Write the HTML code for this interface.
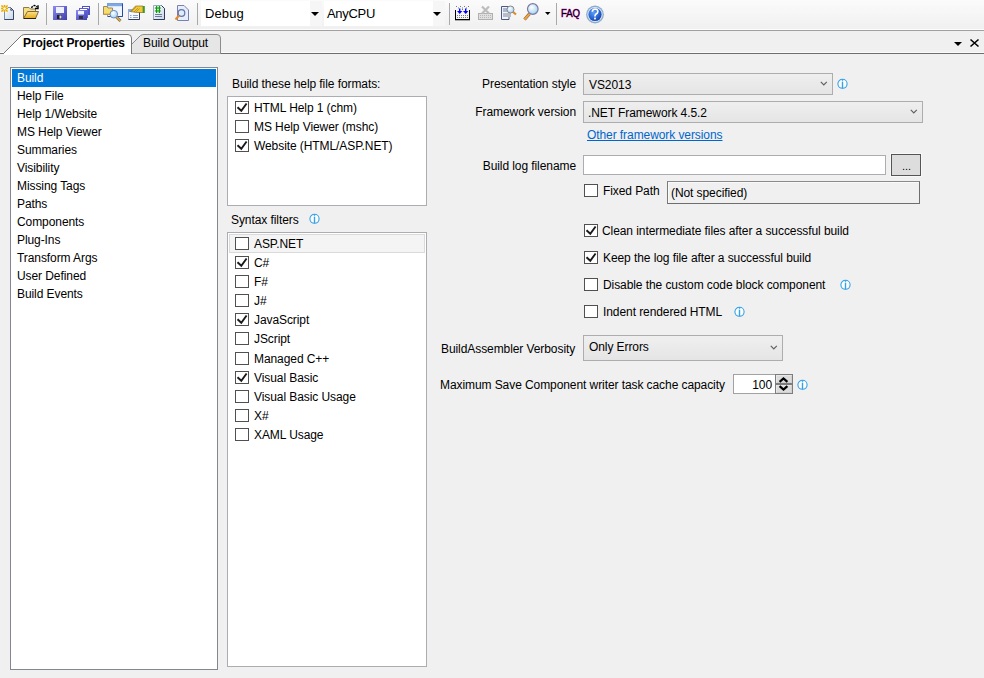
<!DOCTYPE html>
<html><head><meta charset="utf-8">
<style>
*{box-sizing:border-box;margin:0;padding:0}
html,body{width:984px;height:678px;overflow:hidden;background:#f0f0f0}
body{position:relative;font-family:"Liberation Sans",sans-serif;font-size:12px;letter-spacing:-0.08px;color:#000}
.a{position:absolute}
.t{position:absolute;white-space:nowrap;line-height:14px}
#tb{left:0;top:0;width:984px;height:29px;background:linear-gradient(#fbfbfb,#f0f0f0)}
.sep{position:absolute;top:3px;width:1px;height:22px;background:#b9b9b9;border-right:1px solid #fff;width:2px}
.combo{position:absolute;top:1px;height:25px;background:#fff}
.combo .dd{position:absolute;right:0;top:0;width:12px;height:25px;background:#f6f6f6}
.tri{position:absolute;width:0;height:0;border-left:4px solid transparent;border-right:4px solid transparent;border-top:4px solid #000}
.box{position:absolute;background:#fff;border:1px solid #abadb3}
.cb{position:absolute;width:14px;height:13px;border:1px solid #505050;background:#fff}
.cb svg{position:absolute;left:1px;top:1px;overflow:visible}
.dcombo{position:absolute;border:1px solid #adadad;background:linear-gradient(#efefef,#e5e5e5)}
.chev{position:absolute}
.info{position:absolute;width:11px;height:11px}
svg{display:block}
</style></head><body>

<!-- toolbar -->
<div id="tb" class="a"></div>
<div class="a" style="left:0;top:29px;width:984px;height:1px;background:#fdfdfd"></div>
<div class="a" style="left:0;top:30px;width:984px;height:1px;background:#a0a0a0"></div>


<svg class="a" style="left:0;top:0" width="984" height="29">
<defs>
<linearGradient id="gdoc" x1="0" y1="0" x2="1" y2="1"><stop offset="0" stop-color="#ffffff"/><stop offset="1" stop-color="#c9d6e8"/></linearGradient>
<linearGradient id="gfold" x1="0" y1="0" x2="0" y2="1"><stop offset="0" stop-color="#fbe38a"/><stop offset="1" stop-color="#e8a81a"/></linearGradient>
<linearGradient id="gdisk" x1="0" y1="0" x2="1" y2="1"><stop offset="0" stop-color="#8c8cf0"/><stop offset="1" stop-color="#3c3cb0"/></linearGradient>
<radialGradient id="ghelp" cx="0.4" cy="0.35" r="0.7"><stop offset="0" stop-color="#5aa0ff"/><stop offset="1" stop-color="#1040b0"/></radialGradient>
<radialGradient id="glens" cx="0.4" cy="0.35" r="0.7"><stop offset="0" stop-color="#ffffff"/><stop offset="1" stop-color="#9fd0f0"/></radialGradient>
</defs>
<!-- separators -->
<g fill="#a9a9a9"><rect x="46" y="3" width="1" height="22"/><rect x="98" y="3" width="1" height="22"/><rect x="197" y="3" width="1" height="22"/><rect x="449" y="3" width="1" height="22"/><rect x="556" y="3" width="1" height="22"/></g>
<!-- new -->
<path d="M4.5 7.5 H10.5 L13.5 10.5 V19.5 H4.5 Z" fill="url(#gdoc)" stroke="#7a8eae"/>
<path d="M10.5 7.5 L13.5 10.5 V19.5 H4.5" fill="none" stroke="#34486a"/>
<path d="M10 8 L13 11 L10.5 10.5 Z" fill="#34486a"/>
<rect x="1" y="5" width="7" height="7" fill="#f8e290" opacity="0.9"/>
<g stroke="#e0aa10" stroke-width="1.1"><path d="M1 8.5 H8 M4.5 5 V12 M1.5 5.5 L7.5 11.5 M7.5 5.5 L1.5 11.5"/></g>
<circle cx="4.5" cy="8.5" r="1.3" fill="#fffbe0"/>
<!-- open -->
<path d="M23.5 7.5 H29 L30.5 9 H35.5 V18.5 H23.5 Z" fill="#f7df80" stroke="#8a7a55"/>
<path d="M27.5 11.5 H38.5 L35.5 18.5 H23.5 Z" fill="url(#gfold)" stroke="#7a6a45"/>
<path d="M36 18.5 H24" stroke="#2a2010"/>
<path d="M31.6 8 Q32.6 5.3 35 5.6 Q36.2 5.8 37 7" fill="none" stroke="#000" stroke-width="1.4" stroke-dasharray="2 1"/>
<path d="M35 8.5 H38 V5.2" fill="none" stroke="#000" stroke-width="1.4"/>
<!-- save -->
<rect x="53" y="6" width="14" height="14" fill="url(#gdisk)"/>
<rect x="56" y="7" width="8" height="6" fill="#eef0ff"/>
<rect x="57" y="15" width="5" height="4" fill="#222"/><rect x="59.5" y="15.5" width="2" height="3" fill="#ddd"/>
<!-- save all -->
<rect x="82" y="6" width="8" height="9" fill="#5050c8"/><rect x="83" y="7" width="6" height="1.5" fill="#fff"/>
<rect x="79" y="8" width="9" height="10" fill="#6060d0"/><rect x="80" y="9" width="7" height="1.5" fill="#fff"/>
<rect x="76" y="10" width="11" height="10" fill="url(#gdisk)"/>
<rect x="78" y="11" width="6" height="3.5" fill="#eef0ff"/><rect x="79" y="16" width="4" height="3" fill="#333"/>
<!-- project explorer -->
<rect x="107.5" y="3.5" width="15" height="13" fill="#eef5fc" stroke="#7aa0dc"/>
<path d="M122.5 3.5 V16.5 H108" fill="none" stroke="#2a4aa8"/>
<rect x="108" y="4" width="14" height="2.2" fill="#7fa8e4"/>
<path d="M103.5 6.5 H107 L108 8 H112.5 V14.5 H103.5 Z" fill="#f6dc70" stroke="#9a8a60"/>
<path d="M104 14 H112" stroke="#e8a820"/>
<path d="M116.5 17 L120.5 21" stroke="#8a6a30" stroke-width="2.8"/>
<path d="M116.5 17 L120.5 21" stroke="#d8b050" stroke-width="1.4"/>
<circle cx="113.8" cy="14.2" r="3.8" fill="url(#glens)" stroke="#6a88c0"/>
<!-- doc with pencil -->
<rect x="128.5" y="9.5" width="11" height="10" fill="#f6f9ff" stroke="#9aaad0"/>
<path d="M139.5 9.5 V19.5 H128.5" fill="none" stroke="#34405a"/>
<rect x="129" y="10" width="3" height="2" fill="#7aaae8"/>
<path d="M130 15.5 H131.5 M133 15.5 H138 M130 17.5 H131.5 M133 17.5 H138" stroke="#8aa0c8"/>
<path d="M130.5 11.5 L135.5 6 L143 6 L143 12.5 L136.5 12.5 Z" fill="#f2c838" stroke="#7a5a10" stroke-width="0.6"/>
<path d="M132 11 L136 7 M134 12 L138 8 M136 12 L139.5 8.5" stroke="#5a4a20" stroke-width="0.5" opacity="0.7"/>
<rect x="143" y="6" width="1.8" height="7" fill="#30a030"/>
<!-- # doc -->
<path d="M153.5 5.5 H161.5 L164.5 8.5 V19.5 H153.5 Z" fill="url(#gdoc)" stroke="#9aaac4"/>
<path d="M161.5 5.5 L164.5 8.5 V19.5 H153.5" fill="none" stroke="#2c3c5c"/>
<g fill="#109a10"><rect x="156" y="6" width="1.2" height="7"/><rect x="158.8" y="6" width="1.2" height="7"/><rect x="154.8" y="7.5" width="6" height="1.1"/><rect x="154.8" y="10.4" width="6" height="1.1"/></g>
<path d="M155 14.5 H162 M155 16.5 H162" stroke="#6c7c98"/>
<!-- search doc -->
<path d="M177.5 5.5 H184 L188.5 10 V20.5 H177.5 Z" fill="#e4eefc" stroke="#7a80b0"/>
<circle cx="181.5" cy="13" r="3.3" fill="#d8f0fc" stroke="#7070a8" stroke-width="1.2"/>
<path d="M179 15.5 L175.5 19.5" stroke="#e88a20" stroke-width="2"/>
<!-- add icon -->
<g fill="#000"><rect x="455" y="10" width="1" height="10"/><rect x="469" y="10" width="1" height="10"/><rect x="455" y="19" width="15" height="1.3"/></g>
<g fill="#7a7a7a"><rect x="456" y="6" width="1" height="1"/><rect x="460" y="6" width="1" height="1"/><rect x="464" y="6" width="1" height="1"/><rect x="468" y="6" width="1" height="1"/><rect x="458" y="7.5" width="1" height="1"/><rect x="462" y="7.5" width="1" height="1"/><rect x="466" y="7.5" width="1" height="1"/><rect x="462" y="9" width="1" height="1"/>
<rect x="457" y="15" width="1" height="1"/><rect x="459" y="15" width="1" height="1"/><rect x="461" y="15" width="1" height="1"/><rect x="463" y="15" width="1" height="1"/><rect x="465" y="15" width="1" height="1"/><rect x="467" y="15" width="1" height="1"/>
<rect x="457" y="17" width="1" height="1"/><rect x="459" y="17" width="1" height="1"/><rect x="461" y="17" width="1" height="1"/><rect x="463" y="17" width="1" height="1"/><rect x="465" y="17" width="1" height="1"/><rect x="467" y="17" width="1" height="1"/></g>
<g fill="#0000ff"><rect x="459" y="8.5" width="1.4" height="3"/><path d="M457 11 H462.4 L459.7 14 Z"/><rect x="465" y="8.5" width="1.4" height="3"/><path d="M463 11 H468.4 L465.7 14 Z"/></g>
<!-- disabled -->
<rect x="478.5" y="13.5" width="14" height="6" fill="#e0e0e0" stroke="#b0b0b0"/>
<g fill="#b8b8b8"><rect x="480" y="15" width="1" height="1"/><rect x="482" y="15" width="1" height="1"/><rect x="484" y="15" width="1" height="1"/><rect x="486" y="15" width="1" height="1"/><rect x="488" y="15" width="1" height="1"/><rect x="490" y="15" width="1" height="1"/><rect x="480" y="17" width="1" height="1"/><rect x="482" y="17" width="1" height="1"/><rect x="484" y="17" width="1" height="1"/><rect x="486" y="17" width="1" height="1"/><rect x="488" y="17" width="1" height="1"/><rect x="490" y="17" width="1" height="1"/></g>
<path d="M482 6.5 L489 13.5 M489 6.5 L482 13.5" stroke="#bdbdbd" stroke-width="2.2"/>
<!-- page search -->
<path d="M501.5 6.5 H509 V19.5 H501.5 Z" fill="#f0f4fc" stroke="#4a5a80"/>
<path d="M503 9 H507 M503 11 H507" stroke="#6a7aa8"/>
<rect x="503" y="13" width="8" height="4" fill="#b8bcc8"/>
<path d="M512.5 11.5 L516 14.5" stroke="#e08a20" stroke-width="2.2"/>
<circle cx="510.5" cy="9.5" r="3.5" fill="url(#glens)" stroke="#888"/>
<!-- magnifier -->
<path d="M524.5 19.5 L529.5 13.8" stroke="#8a6a40" stroke-width="3.2"/>
<path d="M524.5 19.5 L529.5 13.8" stroke="#f0a040" stroke-width="2"/>
<circle cx="532.8" cy="9" r="5.3" fill="url(#glens)" stroke="#7a7aa0" stroke-width="1.2"/>
<path d="M545 12 H550.5 L547.75 15 Z" fill="#000"/>
<!-- FAQ -->
<text x="561" y="17.4" font-family="Liberation Sans" font-size="11" fill="#000" stroke="#d000d0" stroke-width="0.6" paint-order="stroke" textLength="19" lengthAdjust="spacingAndGlyphs">FAQ</text>
<!-- help -->
<circle cx="595" cy="14.5" r="8.9" fill="#8eaccc"/><circle cx="595" cy="14.5" r="7.6" fill="#dde8f4"/>
<circle cx="595" cy="14.5" r="6.6" fill="url(#ghelp)"/>
<path d="M592.3 11.8 Q592.5 9 595.2 9 Q598 9.2 597.8 11.8 Q597.6 13.2 595.8 14.2 Q595 14.8 595 16.5" fill="none" stroke="#fff" stroke-width="1.7"/>
<rect x="594.1" y="17.6" width="1.8" height="1.8" fill="#fff"/>
</svg>
<div class="combo" style="left:201px;width:121px"><div class="dd"></div><div class="tri" style="left:110px;top:11px"></div></div>
<div class="t" style="left:205px;top:7px;font-size:13px;letter-spacing:0.1px">Debug</div>
<div class="combo" style="left:324px;width:121px"><div class="dd"></div><div class="tri" style="left:109px;top:11px"></div></div>
<div class="t" style="left:327px;top:7px;font-size:13px;letter-spacing:-0.3px">AnyCPU</div>

<!-- tab strip -->
<div class="a" style="left:0;top:52px;width:984px;height:1px;background:#fbfbfb"></div>
<div class="a" style="left:0;top:53px;width:984px;height:1px;background:#6e6e6e"></div>

<svg class="a" style="left:0;top:30px" width="240" height="26">
  <path d="M122.5 23.5 L140.5 5.5 Q142 4.5 144 4.5 L217 4.5 Q220.5 4.5 220.5 8 L220.5 23.5" fill="#e6e6e6" stroke="#8c8c8c"/>
  <path d="M0 23.5 L3.5 23.5 L21.5 5.5 Q23 4.5 25 4.5 L128 4.5 Q131.5 4.5 131.5 8 L131.5 24" fill="#fff" stroke="#777"/>
  <rect x="4" y="23" width="127" height="2" fill="#fff"/>
</svg>
<div class="t" style="left:23px;top:36px;font-weight:bold">Project Properties</div>
<div class="t" style="left:143px;top:36px">Build Output</div>

<div class="tri" style="left:954px;top:42px"></div>
<svg class="a" style="left:969px;top:38px" width="11" height="10"><path d="M1.5 1.5 L9.5 8.5 M9.5 1.5 L1.5 8.5" stroke="#000" stroke-width="1.6"/></svg>

<!-- left list -->
<div class="box" style="left:10px;top:67px;width:208px;height:603px;border-color:#828790"></div>
<div class="a" style="left:12px;top:69px;width:204px;height:18px;background:#0078d7"></div>
<div class="t" style="left:17px;top:71px;color:#fff">Build</div>
<div class="t" style="left:17px;top:89px">Help File</div>
<div class="t" style="left:17px;top:107px">Help 1/Website</div>
<div class="t" style="left:17px;top:125px">MS Help Viewer</div>
<div class="t" style="left:17px;top:143px">Summaries</div>
<div class="t" style="left:17px;top:161px">Visibility</div>
<div class="t" style="left:17px;top:179px">Missing Tags</div>
<div class="t" style="left:17px;top:197px">Paths</div>
<div class="t" style="left:17px;top:215px">Components</div>
<div class="t" style="left:17px;top:233px">Plug-Ins</div>
<div class="t" style="left:17px;top:251px">Transform Args</div>
<div class="t" style="left:17px;top:269px">User Defined</div>
<div class="t" style="left:17px;top:287px">Build Events</div>

<!-- formats -->
<div class="t" style="left:232px;top:77px">Build these help file formats:</div>
<div class="box" style="left:227px;top:96px;width:200px;height:110px"></div>
<div class="cb" style="left:235px;top:101px"><svg width="11" height="11"><path d="M0.5 4.2 L4.3 7.8 L9.6 0.5" fill="none" stroke="#1a1a1a" stroke-width="1.9"/></svg></div>
<div class="t" style="left:254px;top:101px">HTML Help 1 (chm)</div>
<div class="cb" style="left:235px;top:120px"></div>
<div class="t" style="left:254px;top:120px">MS Help Viewer (mshc)</div>
<div class="cb" style="left:235px;top:139px"><svg width="11" height="11"><path d="M0.5 4.2 L4.3 7.8 L9.6 0.5" fill="none" stroke="#1a1a1a" stroke-width="1.9"/></svg></div>
<div class="t" style="left:254px;top:139px">Website (HTML/ASP.NET)</div>
<div class="t" style="left:231px;top:213px">Syntax filters</div>
<div class="info" style="left:309px;top:213px"><svg width="12" height="12"><ellipse cx="5.5" cy="5.8" rx="4.6" ry="4.5" fill="#fff" stroke="#33a2e6" stroke-width="1.1"/><rect x="4.8" y="1.2" width="1.4" height="1.6" fill="#33a2e6"/><rect x="4.8" y="3.6" width="1.4" height="6.8" fill="#33a2e6"/></svg></div>
<div class="box" style="left:227px;top:232px;width:200px;height:435px"></div>
<div class="a" style="left:229px;top:234px;width:196px;height:19px;background:#f4f4f4;border:1px solid #dadada"></div>
<div class="cb" style="left:235px;top:237px"></div>
<div class="t" style="left:254px;top:237px">ASP.NET</div>
<div class="cb" style="left:235px;top:256px"><svg width="11" height="11"><path d="M0.5 4.2 L4.3 7.8 L9.6 0.5" fill="none" stroke="#1a1a1a" stroke-width="1.9"/></svg></div>
<div class="t" style="left:254px;top:256px">C#</div>
<div class="cb" style="left:235px;top:275px"></div>
<div class="t" style="left:254px;top:275px">F#</div>
<div class="cb" style="left:235px;top:294px"></div>
<div class="t" style="left:254px;top:294px">J#</div>
<div class="cb" style="left:235px;top:313px"><svg width="11" height="11"><path d="M0.5 4.2 L4.3 7.8 L9.6 0.5" fill="none" stroke="#1a1a1a" stroke-width="1.9"/></svg></div>
<div class="t" style="left:254px;top:313px">JavaScript</div>
<div class="cb" style="left:235px;top:332px"></div>
<div class="t" style="left:254px;top:332px">JScript</div>
<div class="cb" style="left:235px;top:352px"></div>
<div class="t" style="left:254px;top:352px">Managed C++</div>
<div class="cb" style="left:235px;top:371px"><svg width="11" height="11"><path d="M0.5 4.2 L4.3 7.8 L9.6 0.5" fill="none" stroke="#1a1a1a" stroke-width="1.9"/></svg></div>
<div class="t" style="left:254px;top:371px">Visual Basic</div>
<div class="cb" style="left:235px;top:390px"></div>
<div class="t" style="left:254px;top:390px">Visual Basic Usage</div>
<div class="cb" style="left:235px;top:409px"></div>
<div class="t" style="left:254px;top:409px">X#</div>
<div class="cb" style="left:235px;top:428px"></div>
<div class="t" style="left:254px;top:428px">XAML Usage</div>
<div class="t" style="left:276px;width:300px;text-align:right;top:77px">Presentation style</div>
<div class="dcombo" style="left:583px;top:73px;width:250px;height:22px"></div><div class="chev a" style="left:820px;top:81px"><svg width="8" height="5"><path d="M0.8 0.8 L3.8 3.8 L6.8 0.8" fill="none" stroke="#606060" stroke-width="1.2"/></svg></div>
<div class="t" style="left:589px;top:78px">VS2013</div>
<div class="info" style="left:837px;top:78px"><svg width="12" height="12"><ellipse cx="5.5" cy="5.8" rx="4.6" ry="4.5" fill="#fff" stroke="#33a2e6" stroke-width="1.1"/><rect x="4.8" y="1.2" width="1.4" height="1.6" fill="#33a2e6"/><rect x="4.8" y="3.6" width="1.4" height="6.8" fill="#33a2e6"/></svg></div>
<div class="t" style="left:276px;width:300px;text-align:right;top:105px">Framework version</div>
<div class="dcombo" style="left:583px;top:101px;width:340px;height:22px"></div><div class="chev a" style="left:910px;top:109px"><svg width="8" height="5"><path d="M0.8 0.8 L3.8 3.8 L6.8 0.8" fill="none" stroke="#606060" stroke-width="1.2"/></svg></div>
<div class="t" style="left:588px;top:106px">.NET Framework 4.5.2</div>
<div class="t" style="left:587px;top:128px;color:#0066cc;text-decoration:underline">Other framework versions</div>
<div class="t" style="left:276px;width:300px;text-align:right;top:159px">Build log filename</div>
<div class="a" style="left:583px;top:155px;width:303px;height:20px;background:#fff;border:1px solid #abadb3"></div>
<div class="a" style="left:890px;top:153px;width:32px;height:24px;background:#f8f8f8"></div>
<div class="a" style="left:891px;top:154px;width:30px;height:22px;background:#dddddd;border:1px solid #555"></div>
<div class="t" style="left:902px;top:159px;font-size:11px">...</div>
<div class="cb" style="left:584px;top:184px"></div>
<div class="t" style="left:603px;top:184px">Fixed Path</div>
<div class="a" style="left:667px;top:181px;width:253px;height:23px;border:1px solid #6e6e6e;border-top-color:#8a8a8a;border-left-color:#7a7a7a;box-shadow:inset 1px 1px 0 #fafafa"></div>
<div class="t" style="left:671px;top:186px">(Not specified)</div>
<div class="cb" style="left:584px;top:224px"><svg width="11" height="11"><path d="M0.5 4.2 L4.3 7.8 L9.6 0.5" fill="none" stroke="#1a1a1a" stroke-width="1.9"/></svg></div>
<div class="t" style="left:602px;top:224px">Clean intermediate files after a successful build</div>
<div class="cb" style="left:584px;top:251px"><svg width="11" height="11"><path d="M0.5 4.2 L4.3 7.8 L9.6 0.5" fill="none" stroke="#1a1a1a" stroke-width="1.9"/></svg></div>
<div class="t" style="left:603px;top:251px">Keep the log file after a successful build</div>
<div class="cb" style="left:584px;top:278px"></div>
<div class="t" style="left:603px;top:278px">Disable the custom code block component</div>
<div class="info" style="left:840px;top:279px"><svg width="12" height="12"><ellipse cx="5.5" cy="5.8" rx="4.6" ry="4.5" fill="#fff" stroke="#33a2e6" stroke-width="1.1"/><rect x="4.8" y="1.2" width="1.4" height="1.6" fill="#33a2e6"/><rect x="4.8" y="3.6" width="1.4" height="6.8" fill="#33a2e6"/></svg></div>
<div class="cb" style="left:584px;top:305px"></div>
<div class="t" style="left:603px;top:305px">Indent rendered HTML</div>
<div class="info" style="left:734px;top:306px"><svg width="12" height="12"><ellipse cx="5.5" cy="5.8" rx="4.6" ry="4.5" fill="#fff" stroke="#33a2e6" stroke-width="1.1"/><rect x="4.8" y="1.2" width="1.4" height="1.6" fill="#33a2e6"/><rect x="4.8" y="3.6" width="1.4" height="6.8" fill="#33a2e6"/></svg></div>
<div class="t" style="left:441px;top:342px">BuildAssembler Verbosity</div>
<div class="dcombo" style="left:583px;top:335px;width:200px;height:26px"></div><div class="chev a" style="left:770px;top:345px"><svg width="8" height="5"><path d="M0.8 0.8 L3.8 3.8 L6.8 0.8" fill="none" stroke="#606060" stroke-width="1.2"/></svg></div>
<div class="t" style="left:589px;top:340px">Only Errors</div>
<div class="t" style="left:440px;top:378px">Maximum Save Component writer task cache capacity</div>
<div class="a" style="left:733px;top:374px;width:60px;height:20px;background:#fff;border:1px solid #a2a2a2"></div>
<div class="t" style="left:700px;width:72px;text-align:right;top:378px">100</div>
<div class="a" style="left:775px;top:374px;width:18px;height:20px;background:#7d7d7d"></div>
<div class="a" style="left:776px;top:375px;width:16px;height:8px;background:#dcdcdc;border:1px solid #e8e8e8;border-right-color:#d0d0d0;border-bottom-color:#d0d0d0"></div>
<div class="a" style="left:776px;top:385px;width:16px;height:8px;background:#dcdcdc;border:1px solid #e8e8e8;border-right-color:#d0d0d0;border-bottom-color:#d0d0d0"></div>
<svg class="a" style="left:775px;top:374px" width="18" height="20"><path d="M4.6 7.9 L8.5 4.5 L12.4 7.9" fill="none" stroke="#000" stroke-width="2.2"/><path d="M4.6 12.1 L8.5 15.5 L12.4 12.1" fill="none" stroke="#000" stroke-width="2.2"/></svg>
<div class="info" style="left:797px;top:379px"><svg width="12" height="12"><ellipse cx="5.5" cy="5.8" rx="4.6" ry="4.5" fill="#fff" stroke="#33a2e6" stroke-width="1.1"/><rect x="4.8" y="1.2" width="1.4" height="1.6" fill="#33a2e6"/><rect x="4.8" y="3.6" width="1.4" height="6.8" fill="#33a2e6"/></svg></div>
</body></html>
